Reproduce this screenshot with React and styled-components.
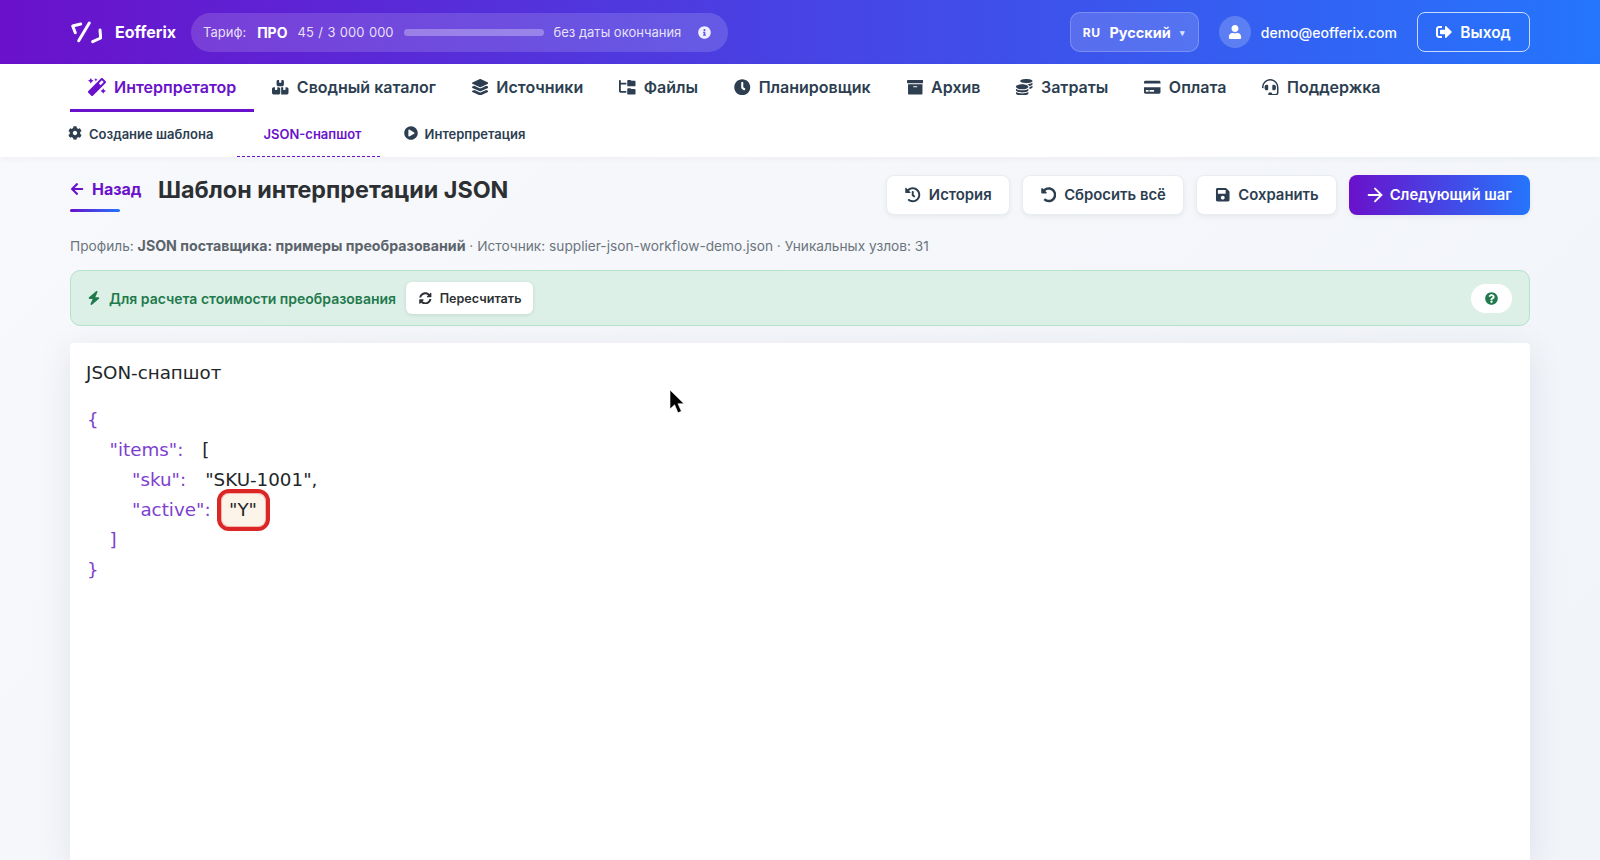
import React from "react";
import styled, { createGlobalStyle } from "styled-components";
import {
  FaArchive,
  FaArrowLeft,
  FaClock,
  FaCoins,
  FaCog,
  FaCreditCard,
  FaHeadset,
  FaHistory,
  FaInfoCircle,
  FaLayerGroup,
  FaMagic,
  FaPlayCircle,
  FaQuestionCircle,
  FaSave,
  FaSignOutAlt,
  FaSyncAlt,
  FaUndoAlt,
  FaUser,
} from "react-icons/fa";
import { FaBolt, FaBoxesStacked, FaFolderTree } from "react-icons/fa6";
import { FiArrowRight } from "react-icons/fi";

const GlobalStyle = createGlobalStyle`
  html, body {
    margin: 0;
    height: 100%;
    overflow: hidden;
    font-family: Inter, "Liberation Sans", sans-serif;
  }
  * { box-sizing: border-box; }
`;

const Page = styled.div`
  position: relative;
  height: 860px;
  overflow: hidden;
  display: flex;
  flex-direction: column;
  background: linear-gradient(135deg, #f8f9fc 0%, #f1f4f9 100%);
`;

const Header = styled.header`
  height: 64px;
  flex: none;
  display: flex;
  align-items: center;
  padding: 0 70px;
  background: linear-gradient(90deg, #6a11cb 0%, #2575fc 100%);
  color: #fff;
`;

const Brand = styled.div`
  display: flex;
  align-items: center;
  gap: 13px;
  font-size: 16px;
  font-weight: 700;
  margin-right: 15px;
`;

const PlanPill = styled.div`
  display: flex;
  align-items: center;
  height: 39px;
  width: 537px;
  padding: 0 17px 0 12px;
  border-radius: 20px;
  background: rgba(255, 255, 255, 0.15);
  font-size: 13px;
  color: rgba(255, 255, 255, 0.85);
`;

const PlanName = styled.strong`
  margin: 0 10px 0 11px;
  font-size: 14px;
  font-weight: 700;
  color: #fff;
`;

const PlanCount = styled.span`
  word-spacing: 0.8px;
`;

const ProgressTrack = styled.div`
  width: 140px;
  height: 7px;
  margin: 0 10px;
  border-radius: 4px;
  background: rgba(255, 255, 255, 0.3);
`;

const InfoIcon = styled(FaInfoCircle)`
  margin-left: auto;
  font-size: 13px;
  color: rgba(255, 255, 255, 0.9);
`;

const HeaderRight = styled.div`
  margin-left: auto;
  display: flex;
  align-items: center;
`;

const LangButton = styled.div`
  width: 129px;
  height: 40px;
  display: flex;
  align-items: center;
  padding: 0 12px;
  border: 1px solid rgba(255, 255, 255, 0.22);
  border-radius: 10px;
  background: rgba(255, 255, 255, 0.15);
  font-size: 14.5px;
  font-weight: 700;
`;

const LangCode = styled.span`
  margin-right: 9px;
  font-size: 12px;
  letter-spacing: 0.5px;
`;

const Caret = styled.span`
  margin-left: 9px;
  font-size: 9px;
  opacity: 0.8;
`;

const UserBadge = styled.div`
  width: 32px;
  height: 32px;
  margin: 0 10px 0 20px;
  display: flex;
  align-items: center;
  justify-content: center;
  border-radius: 50%;
  background: rgba(255, 255, 255, 0.2);
  font-size: 14px;
`;

const Email = styled.span`
  font-size: 14px;
  font-weight: 500;
`;

const LogoutButton = styled.div`
  width: 113px;
  height: 40px;
  margin-left: 20px;
  display: flex;
  align-items: center;
  justify-content: center;
  gap: 8px;
  border: 1px solid rgba(255, 255, 255, 0.75);
  border-radius: 8px;
  font-size: 15.5px;
  font-weight: 600;
  svg {
    font-size: 16px;
  }
`;

const NavCard = styled.div`
  flex: none;
  background: #fff;
  box-shadow: 0 2px 6px rgba(0, 0, 0, 0.04);
  position: relative;
`;

const MainTabs = styled.nav`
  height: 48px;
  display: flex;
  padding: 0 70px;
`;

const MainTab = styled.div`
  display: flex;
  align-items: center;
  gap: 8px;
  padding: 1px 18px 0;
  font-size: 16px;
  font-weight: 600;
  white-space: nowrap;
  color: ${(p) => (p.$active ? "#6a11cb" : "#2c3e50")};
  border-bottom: 3px solid ${(p) => (p.$active ? "#6a11cb" : "transparent")};
  svg {
    font-size: ${(p) => (p.$active ? "18px" : "16.5px")};
  }
`;

const SubTabs = styled.nav`
  height: 45px;
  display: flex;
  padding-left: 44px;
`;

const SubTab = styled.div`
  display: flex;
  align-items: center;
  gap: 7px;
  padding: ${(p) => (p.$active ? "0 18px 0 26px" : "0 24px")};
  font-size: 13px;
  font-weight: 600;
  white-space: nowrap;
  color: ${(p) => (p.$active ? "#6a11cb" : "#2c3e50")};
  border-bottom: 1px dashed ${(p) => (p.$active ? "#6a11cb" : "transparent")};
  svg {
    font-size: 14px;
    margin-top: -2px;
  }
`;

const Content = styled.main`
  flex: 1;
  display: flex;
  flex-direction: column;
  padding: 18px 70px 0;
`;

const TitleRow = styled.div`
  display: flex;
  align-items: flex-start;
`;

const BackLink = styled.div`
  position: relative;
  width: 88px;
  height: 36px;
  margin-top: 1px;
  display: flex;
  align-items: center;
  gap: 8px;
  padding-bottom: 10px;
  font-size: 16px;
  font-weight: 700;
  color: #6a11cb;
  svg {
    font-size: 14px;
  }
  &::after {
    content: "";
    position: absolute;
    left: 0;
    bottom: 0;
    width: 50px;
    height: 3px;
    border-radius: 2px;
    background: linear-gradient(90deg, #6a11cb, #2575fc);
  }
`;

const Title = styled.h1`
  margin: 0;
  font-size: 23.3px;
  line-height: 30px;
  font-weight: 700;
  color: #2d3033;
`;

const Actions = styled.div`
  margin-left: auto;
  display: flex;
  gap: 12px;
`;

const ActionButton = styled.div`
  height: 40px;
  display: flex;
  align-items: center;
  gap: 8px;
  padding: 0 17px 0 18px;
  border: 1px solid #e9ecf1;
  border-radius: 8px;
  background: #fff;
  box-shadow: 0 2px 5px rgba(0, 0, 0, 0.06);
  font-size: 14.85px;
  font-weight: 600;
  white-space: nowrap;
  color: #2c3e50;
  svg {
    font-size: 15.5px;
    flex: none;
  }
`;

const NextButton = styled(ActionButton)`
  border: none;
  gap: 7px;
  padding: 0 18px;
  background: linear-gradient(90deg, #6a11cb, #2575fc);
  color: #fff;
  svg {
    font-size: 22px;
    margin: 0 -3px;
  }
`;

const MetaLine = styled.div`
  margin-top: 21px;
  font-size: 13.7px;
  line-height: 20px;
  color: #6c757d;
  strong {
    font-size: 14.2px;
    font-weight: 700;
    color: #5c646c;
  }
`;

const Banner = styled.div`
  height: 56px;
  margin-top: 14px;
  display: flex;
  align-items: center;
  padding: 0 17px 0 16px;
  border: 1px solid #b5e2cb;
  border-radius: 10px;
  background: #dcf0e7;
`;

const BannerText = styled.span`
  display: flex;
  align-items: center;
  gap: 8px;
  font-size: 14px;
  font-weight: 600;
  color: #1f7a4d;
  svg {
    font-size: 14px;
  }
`;

const RecalcButton = styled.div`
  height: 32px;
  margin-left: 10px;
  display: flex;
  align-items: center;
  gap: 8px;
  padding: 0 12px 0 13px;
  border-radius: 6px;
  background: #fff;
  box-shadow: 0 1px 4px rgba(0, 0, 0, 0.1);
  font-size: 12.6px;
  font-weight: 600;
  color: #2d3033;
`;

const HelpPill = styled.div`
  width: 41px;
  height: 29px;
  margin-left: auto;
  display: flex;
  align-items: center;
  justify-content: center;
  border-radius: 15px;
  background: #fff;
  color: #1f7a4d;
  font-size: 13px;
`;

const SnapshotCard = styled.section`
  flex: 1;
  margin-top: 17px;
  padding: 18px 16px;
  border-radius: 4px 4px 0 0;
  background: #fff;
  box-shadow: 0 8px 36px rgba(40, 50, 80, 0.1);
  font-family: "DejaVu Sans", sans-serif;
  color: #22262a;
`;

const SnapshotTitle = styled.div`
  font-size: 18.3px;
  line-height: 24px;
`;

const Code = styled.div`
  margin-top: 19.5px;
  font-size: 18.3px;
`;

const CodeLine = styled.div`
  height: 30px;
  display: flex;
  align-items: center;
  padding-left: ${(p) => 1 + p.$depth * 22.5}px;
`;

const Punct = styled.span`
  color: #7e3fd0;
`;

const CodeValue = styled.span`
  margin-left: 19px;
`;

const Highlight = styled.span`
  height: 34px;
  width: 45px;
  margin-left: 10px;
  display: flex;
  align-items: center;
  justify-content: center;
  border: 1px solid #f2b8b0;
  border-radius: 8px;
  outline: 4px solid #dc2626;
  background: #fdf4e9;
`;

const Cursor = styled.svg`
  position: absolute;
  left: 669px;
  top: 389px;
  width: 15px;
  height: 26px;
`;

const LogoMark = () => (
  <svg width="32" height="24" viewBox="0 0 32 24" fill="none" stroke="#fff" strokeWidth="3" strokeLinecap="round" strokeLinejoin="round">
    <path d="M10.7 4 2.7 6l2.6 6.7" />
    <path d="M8.7 20.7 19.3 3" />
    <path d="M30 10l.7 8-8 3.7" />
  </svg>
);

const mainTabs = [
  [FaMagic, "Интерпретатор", true],
  [FaBoxesStacked, "Сводный каталог"],
  [FaLayerGroup, "Источники"],
  [FaFolderTree, "Файлы"],
  [FaClock, "Планировщик"],
  [FaArchive, "Архив"],
  [FaCoins, "Затраты"],
  [FaCreditCard, "Оплата"],
  [FaHeadset, "Поддержка"],
];

const App = () => {
  return (
    <Page>
      <GlobalStyle />
      <Header>
        <Brand>
          <LogoMark />
          Eofferix
        </Brand>
        <PlanPill>
          <span>Тариф:</span>
          <PlanName>ПРО</PlanName>
          <PlanCount>45 / 3 000 000</PlanCount>
          <ProgressTrack />
          <span>без даты окончания</span>
          <InfoIcon />
        </PlanPill>
        <HeaderRight>
          <LangButton>
            <LangCode>RU</LangCode>
            Русский
            <Caret>▾</Caret>
          </LangButton>
          <UserBadge>
            <FaUser />
          </UserBadge>
          <Email>demo@eofferix.com</Email>
          <LogoutButton>
            <FaSignOutAlt />
            Выход
          </LogoutButton>
        </HeaderRight>
      </Header>
      <NavCard>
        <MainTabs>
          {mainTabs.map(([Icon, label, active]) => (
            <MainTab key={label} $active={active}>
              <Icon />
              {label}
            </MainTab>
          ))}
        </MainTabs>
        <SubTabs>
          <SubTab>
            <FaCog />
            Создание шаблона
          </SubTab>
          <SubTab $active>JSON-снапшот</SubTab>
          <SubTab>
            <FaPlayCircle />
            Интерпретация
          </SubTab>
        </SubTabs>
      </NavCard>
      <Content>
        <TitleRow>
          <BackLink>
            <FaArrowLeft />
            Назад
          </BackLink>
          <Title>Шаблон интерпретации JSON</Title>
          <Actions>
            <ActionButton>
              <FaHistory />
              История
            </ActionButton>
            <ActionButton>
              <FaUndoAlt />
              Сбросить всё
            </ActionButton>
            <ActionButton>
              <FaSave />
              Сохранить
            </ActionButton>
            <NextButton>
              <FiArrowRight />
              Следующий шаг
            </NextButton>
          </Actions>
        </TitleRow>
        <MetaLine>
          Профиль: <strong>JSON поставщика: примеры преобразований</strong> · Источник: supplier-json-workflow-demo.json · Уникальных узлов: 31
        </MetaLine>
        <Banner>
          <BannerText>
            <FaBolt />
            Для расчета стоимости преобразования
          </BannerText>
          <RecalcButton>
            <FaSyncAlt />
            Пересчитать
          </RecalcButton>
          <HelpPill>
            <FaQuestionCircle />
          </HelpPill>
        </Banner>
        <SnapshotCard>
          <SnapshotTitle>JSON-снапшот</SnapshotTitle>
          <Code>
            <CodeLine $depth={0}><Punct>{"{"}</Punct></CodeLine>
            <CodeLine $depth={1}>
              <Punct>"items":</Punct>
              <CodeValue>[</CodeValue>
            </CodeLine>
            <CodeLine $depth={2}>
              <Punct>"sku":</Punct>
              <CodeValue>"SKU-1001",</CodeValue>
            </CodeLine>
            <CodeLine $depth={2}>
              <Punct>"active":</Punct>
              <Highlight>"Y"</Highlight>
            </CodeLine>
            <CodeLine $depth={1}><Punct>]</Punct></CodeLine>
            <CodeLine $depth={0}><Punct>{"}"}</Punct></CodeLine>
          </Code>
        </SnapshotCard>
      </Content>
      <Cursor viewBox="0 0 15 26">
        <path d="M1 1v19l4.6-4.2 3.4 8 3.4-1.5-3.4-7.6h6z" fill="#000" stroke="#fff" strokeWidth="0.6" />
      </Cursor>
    </Page>
  );
};

export default App;
